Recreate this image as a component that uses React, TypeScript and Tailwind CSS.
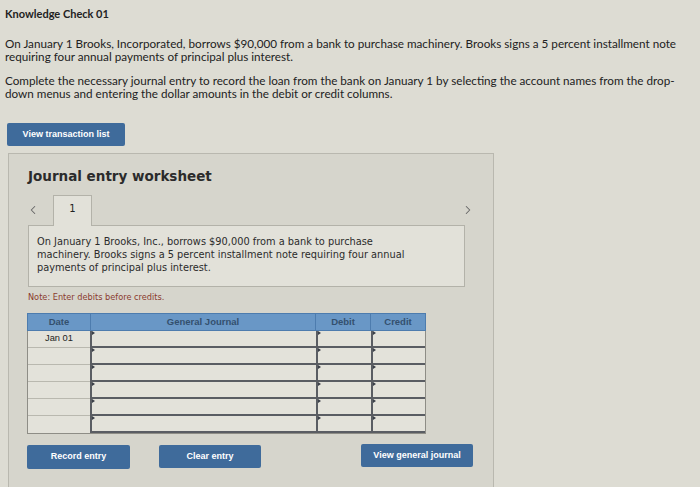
import { ChevronLeft, ChevronRight } from 'lucide-react'

const rows = ['Jan 01', '', '', '', '', '']

function Marker() {
  return <span className="absolute left-0 top-0 h-0 w-0 border-y-[2px] border-l-[3px] border-y-transparent border-l-[#3a3f48]" />
}

function InputCell({ w }: { w: string }) {
  return (
    <div className={`relative h-full ${w} border-b-2 border-l-2 border-[#5a5d63] bg-[#e3e2da]`}>
      <Marker />
    </div>
  )
}

export default function App() {
  return (
    <div className="h-[487px] w-[700px] overflow-hidden bg-[#dddcd3] text-[#222] font-['Lato',sans-serif]">
      <div className="px-[5px] pt-[7px]">
        <h1 className="text-[11px] font-bold leading-[14px]">Knowledge Check 01</h1>
        <p className="mt-[16px] text-[11.7px] leading-[13px]">
          On January 1 Brooks, Incorporated, borrows $90,000 from a bank to purchase machinery. Brooks signs a 5 percent installment note requiring four annual payments of principal plus interest.
        </p>
        <p className="mt-[11px] pr-[20px] text-[11.7px] leading-[13px]">
          Complete the necessary journal entry to record the loan from the bank on January 1 by selecting the account names from the drop-down menus and entering the dollar amounts in the debit or credit columns.
        </p>
      </div>

      <div className="ml-[7px] mt-[23px] flex h-[23px] w-[118px] items-center justify-center rounded-[2px] bg-[#3f6b9b] font-['Liberation_Sans',sans-serif] text-[9px] font-bold text-white">
        View transaction list
      </div>

      <div className="ml-[8px] mt-[7px] h-[340px] w-[486px] border border-[#b9b8af] bg-[#d6d5cc] pl-[18px] pr-[27px] font-['DejaVu_Sans',sans-serif]">
        <h2 className="ml-[1px] mt-[12px] text-[13.5px] font-bold leading-[20px] text-[#2b2b2b]">Journal entry worksheet</h2>

        <div className="mt-[9px] flex h-[30px] items-center">
          <ChevronLeft className="ml-[-1px] h-[14px] w-[14px] text-[#666]" strokeWidth={1.8} />
          <div className="relative top-[1px] ml-[13px] flex h-[31px] w-[39px] items-center justify-center self-end border border-b-0 border-[#b3b2a9] bg-[#e2e1d9] pb-[5px] text-[10px] text-[#222]">
            1
          </div>
          <div className="flex-1" />
          <ChevronRight className="mr-[-9px] h-[14px] w-[14px] text-[#666]" strokeWidth={1.8} />
        </div>

        <div className="ml-[1px] h-[62px] w-[437px] border border-[#b3b2a9] bg-[#e2e1d9] pl-[8px] pr-[45px] pt-[9px] text-[9.8px] leading-[13px] text-[#2b2b2b]">
          On January 1 Brooks, Inc., borrows $90,000 from a bank to purchase machinery. Brooks signs a 5 percent installment note requiring four annual payments of principal plus interest.
        </div>

        <p className="ml-[1px] mt-[5px] text-[8.2px] leading-[10px] text-[#8a3b2e]">Note: Enter debits before credits.</p>

        <div className="mt-[11px] w-[399px] font-['Liberation_Sans',sans-serif]">
          <div className="flex h-[18px] border border-[#4d7cae] bg-[#6997c6] text-[9.5px] font-bold text-[#34506e]">
            <div className="flex w-[63px] items-center justify-center border-r border-[#4d7cae]">Date</div>
            <div className="flex w-[225px] items-center justify-center border-r border-[#4d7cae]">General Journal</div>
            <div className="flex w-[55px] items-center justify-center border-r border-[#4d7cae]">Debit</div>
            <div className="flex flex-1 items-center justify-center">Credit</div>
          </div>
          <div className="border-x border-b border-[#8e8d86]">
            {rows.map((d, i) => (
              <div key={i} className="flex h-[17px]">
                <div className={`flex w-[62px] items-center justify-center bg-[#e3e2da] text-[9.3px] text-[#222] ${i < rows.length - 1 ? 'border-b border-[#b9b8af]' : ''}`}>
                  {d}
                </div>
                <InputCell w="w-[226px]" />
                <InputCell w="w-[55px]" />
                <div className="relative h-full flex-1 border-b-2 border-l-2 border-[#5a5d63] bg-[#e3e2da]">
                  <Marker />
                </div>
              </div>
            ))}
          </div>
        </div>

        <div className="mt-[11px] flex items-start font-['Liberation_Sans',sans-serif] text-[9px] font-bold text-white">
          <div className="flex h-[24px] w-[103px] shrink-0 items-center justify-center rounded-[2px] bg-[#3f6b9b]">Record entry</div>
          <div className="ml-[29px] flex h-[23px] w-[102px] shrink-0 items-center justify-center rounded-[2px] bg-[#3f6b9b]">Clear entry</div>
          <div className="ml-[100px] -mt-[1px] flex h-[23px] w-[112px] shrink-0 items-center justify-center rounded-[2px] bg-[#3f6b9b]">View general journal</div>
        </div>
      </div>
    </div>
  )
}
